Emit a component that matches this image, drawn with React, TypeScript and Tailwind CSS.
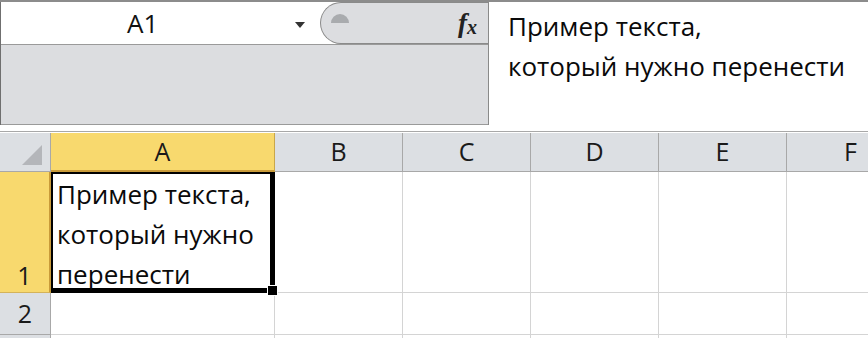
const font = { fontFamily: '"Open Sans", "Noto Sans", sans-serif' };

const cols = ['A', 'B', 'C', 'D', 'E', 'F'];

const FormulaArea = () => (
  <div className="flex h-[125px] border-t-2 border-[#8c8c8c] bg-white">
    <div className="flex w-[488px] flex-col border-l border-[#6f6f6f]">
      <div className="flex h-[42px] bg-white">
        <div className="w-[279px] pl-[126px] text-[26px] leading-[42px] text-[#111]">A1</div>
        <div className="flex w-[40px] items-center justify-center pt-[4px]">
          <svg width="12" height="8" viewBox="0 0 12 8">
            <path d="M1 1h10L6 7z" fill="#333" />
          </svg>
        </div>
        <div className="relative flex flex-1 items-center justify-end rounded-tl-[22px] rounded-bl-[22px] border border-r-0 border-[#8a8a8a] bg-[#dcdde0] pr-[11px]">
          <span className="absolute left-[10px] top-[11px] h-[9px] w-[18px] rounded-t-full bg-[#a9abae]" />
          <span className="text-[27px] font-bold italic leading-none text-[#222]" style={{ fontFamily: '"Liberation Serif", serif' }}>
            f<span className="relative top-[2px] text-[20px]">x</span>
          </span>
        </div>
      </div>
      <div className="flex-1 border-t border-[#9a9a9a] bg-[#dcdde0]" />
      <div className="h-px bg-[#9a9a9a]" />
    </div>
    <div className="flex-1 border-l border-[#8a8a8a] bg-white pl-[19px] pt-[4px] text-[26px] leading-[40px] text-[#0a0a0a]">
      <div>Пример текста,</div>
      <div>который нужно перенести</div>
    </div>
  </div>
);

const Grid = () => (
  <div
    className="grid overflow-hidden border-t border-[#a8a8a8] pt-[1px]"
    style={{ gridTemplateColumns: '51px 224px repeat(5, 128px)', gridTemplateRows: '39px 121px 42px 20px' }}
  >
    <div className="relative border-r border-b border-[#a8a8a8] bg-[#dcdfe3]">
      <svg className="absolute left-[22px] top-[12px]" width="20" height="20" viewBox="0 0 20 20">
        <path d="M20 0V20H0z" fill="#b4b6ba" />
      </svg>
    </div>
    {cols.map((c, i) => (
      <div
        key={c}
        className={
          i === 0
            ? 'flex items-center justify-center border-r border-b-2 border-r-[#c9a74a] border-b-[#c99b3a] bg-[#f8d96e] text-[25px] text-[#1a1a1a]'
            : 'flex items-center justify-center border-r border-b border-[#a8a8a8] bg-[#dcdfe3] text-[25px] text-[#1a1a1a]'
        }
      >
        {c}
      </div>
    ))}

    <div className="flex items-end justify-center border-r-2 border-b border-r-[#c99b3a] border-b-[#d4b35a] bg-[#f8d96e] pb-[2px] text-[25px] leading-[30px] text-[#1a1a1a]">
      1
    </div>
    <div className="relative flex flex-col justify-end border-t-2 border-l-2 border-r-[5px] border-b-[5px] border-black bg-white pl-[4px] text-[26px] leading-[40px] text-[#0a0a0a]">
      <div className="-mb-[6px]">
        <div>Пример текста,</div>
        <div>который нужно</div>
        <div>перенести</div>
      </div>
      <span className="absolute -right-[8px] -bottom-[8px] h-[11px] w-[11px] border border-white bg-black" />
    </div>
    {cols.slice(1).map((c) => (
      <div key={'r1' + c} className="border-r border-b border-[#d4d4d4] bg-white" />
    ))}

    <div className="flex items-center justify-center border-r border-b border-[#a8a8a8] bg-[#dcdfe3] text-[25px] text-[#1a1a1a]">
      2
    </div>
    {cols.map((c) => (
      <div key={'r2' + c} className="border-r border-b border-[#d4d4d4] bg-white" />
    ))}

    <div className="border-r border-[#a8a8a8] bg-[#dcdfe3]" />
    {cols.map((c) => (
      <div key={'r3' + c} className="border-r border-[#d4d4d4] bg-white" />
    ))}
  </div>
);

export default function App() {
  return (
    <div className="h-[338px] w-[868px] overflow-hidden bg-white" style={font}>
      <FormulaArea />
      <div className="h-[6px] bg-white" />
      <Grid />
    </div>
  );
}
